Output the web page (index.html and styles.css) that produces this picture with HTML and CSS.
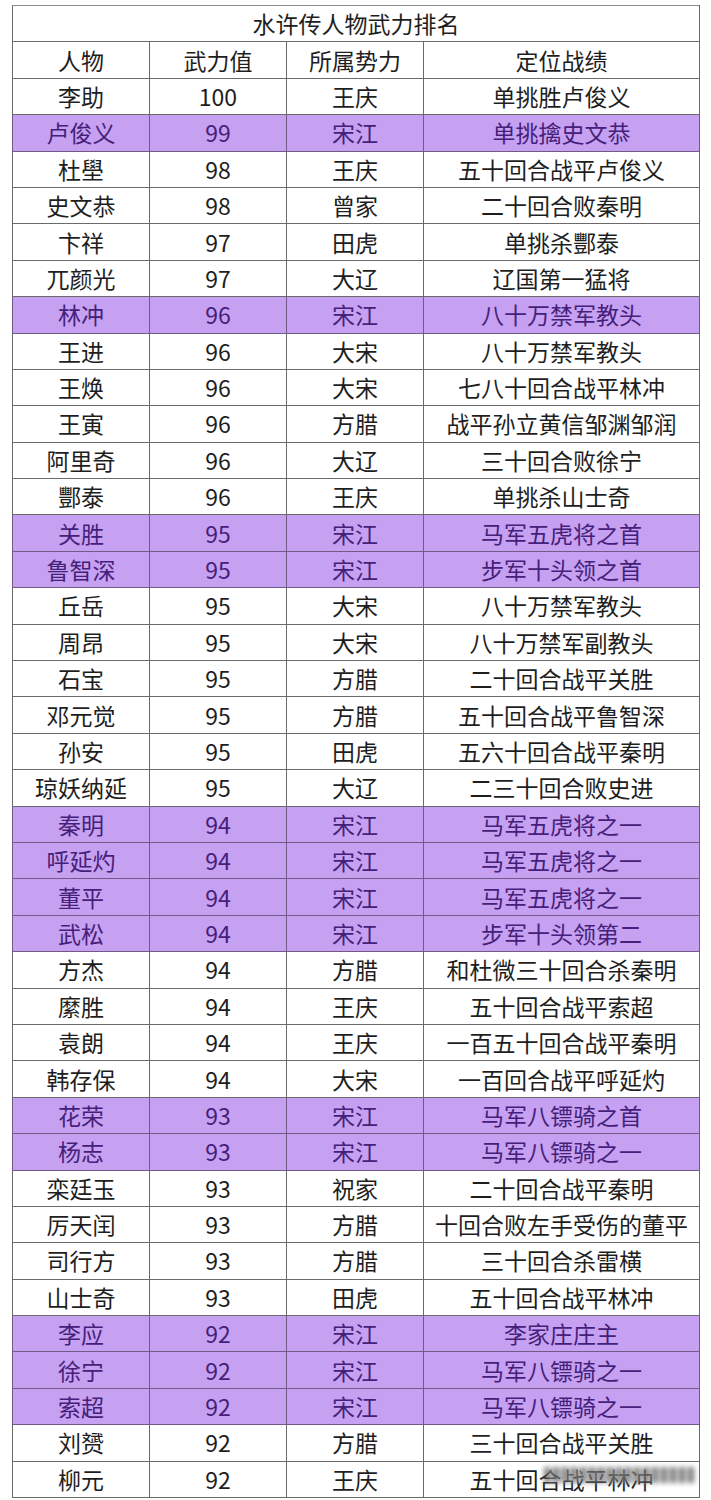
FILE: index.html
```html
<!DOCTYPE html>
<html lang="zh">
<head>
<meta charset="utf-8">
<link rel="stylesheet" href="styles.css">
</head>
<body>
<table class="rank">
<colgroup><col class="c1"><col class="c2"><col class="c3"><col class="c4"></colgroup>
<tr><td class="title" colspan="4">水许传人物武力排名</td></tr>
<tr><td>人物</td><td>武力值</td><td>所属势力</td><td>定位战绩</td></tr>
<tr><td>李助</td><td>100</td><td>王庆</td><td>单挑胜卢俊义</td></tr>
<tr class="p"><td>卢俊义</td><td>99</td><td>宋江</td><td>单挑擒史文恭</td></tr>
<tr><td>杜壆</td><td>98</td><td>王庆</td><td>五十回合战平卢俊义</td></tr>
<tr><td>史文恭</td><td>98</td><td>曾家</td><td>二十回合败秦明</td></tr>
<tr><td>卞祥</td><td>97</td><td>田虎</td><td>单挑杀酆泰</td></tr>
<tr><td>兀颜光</td><td>97</td><td>大辽</td><td>辽国第一猛将</td></tr>
<tr class="p"><td>林冲</td><td>96</td><td>宋江</td><td>八十万禁军教头</td></tr>
<tr><td>王进</td><td>96</td><td>大宋</td><td>八十万禁军教头</td></tr>
<tr><td>王焕</td><td>96</td><td>大宋</td><td>七八十回合战平林冲</td></tr>
<tr><td>王寅</td><td>96</td><td>方腊</td><td>战平孙立黄信邹渊邹润</td></tr>
<tr><td>阿里奇</td><td>96</td><td>大辽</td><td>三十回合败徐宁</td></tr>
<tr><td>酆泰</td><td>96</td><td>王庆</td><td>单挑杀山士奇</td></tr>
<tr class="p"><td>关胜</td><td>95</td><td>宋江</td><td>马军五虎将之首</td></tr>
<tr class="p"><td>鲁智深</td><td>95</td><td>宋江</td><td>步军十头领之首</td></tr>
<tr><td>丘岳</td><td>95</td><td>大宋</td><td>八十万禁军教头</td></tr>
<tr><td>周昂</td><td>95</td><td>大宋</td><td>八十万禁军副教头</td></tr>
<tr><td>石宝</td><td>95</td><td>方腊</td><td>二十回合战平关胜</td></tr>
<tr><td>邓元觉</td><td>95</td><td>方腊</td><td>五十回合战平鲁智深</td></tr>
<tr><td>孙安</td><td>95</td><td>田虎</td><td>五六十回合战平秦明</td></tr>
<tr><td>琼妖纳延</td><td>95</td><td>大辽</td><td>二三十回合败史进</td></tr>
<tr class="p"><td>秦明</td><td>94</td><td>宋江</td><td>马军五虎将之一</td></tr>
<tr class="p"><td>呼延灼</td><td>94</td><td>宋江</td><td>马军五虎将之一</td></tr>
<tr class="p"><td>董平</td><td>94</td><td>宋江</td><td>马军五虎将之一</td></tr>
<tr class="p"><td>武松</td><td>94</td><td>宋江</td><td>步军十头领第二</td></tr>
<tr><td>方杰</td><td>94</td><td>方腊</td><td>和杜微三十回合杀秦明</td></tr>
<tr><td>縻胜</td><td>94</td><td>王庆</td><td>五十回合战平索超</td></tr>
<tr><td>袁朗</td><td>94</td><td>王庆</td><td>一百五十回合战平秦明</td></tr>
<tr><td>韩存保</td><td>94</td><td>大宋</td><td>一百回合战平呼延灼</td></tr>
<tr class="p"><td>花荣</td><td>93</td><td>宋江</td><td>马军八镖骑之首</td></tr>
<tr class="p"><td>杨志</td><td>93</td><td>宋江</td><td>马军八镖骑之一</td></tr>
<tr><td>栾廷玉</td><td>93</td><td>祝家</td><td>二十回合战平秦明</td></tr>
<tr><td>厉天闰</td><td>93</td><td>方腊</td><td>十回合败左手受伤的董平</td></tr>
<tr><td>司行方</td><td>93</td><td>方腊</td><td>三十回合杀雷横</td></tr>
<tr><td>山士奇</td><td>93</td><td>田虎</td><td>五十回合战平林冲</td></tr>
<tr class="p"><td>李应</td><td>92</td><td>宋江</td><td>李家庄庄主</td></tr>
<tr class="p"><td>徐宁</td><td>92</td><td>宋江</td><td>马军八镖骑之一</td></tr>
<tr class="p"><td>索超</td><td>92</td><td>宋江</td><td>马军八镖骑之一</td></tr>
<tr><td>刘赟</td><td>92</td><td>方腊</td><td>三十回合战平关胜</td></tr>
<tr><td>柳元</td><td>92</td><td>王庆</td><td class="wm">五十回合战平林冲<span class="blur"></span></td></tr>
</table>
</body>
</html>
```

FILE: styles.css
```css
html, body {
  margin: 0;
  padding: 0;
  background: #ffffff;
}
body {
  padding: 5px 0 0 12px;
  font-family: "Noto Sans CJK SC", "Noto Sans", sans-serif;
  color: #1e1e1e;
}
.rank {
  border-collapse: collapse;
  table-layout: fixed;
  width: 687px;
  font-size: 23px;
}
.c1 { width: 137px; }
.c2 { width: 137px; }
.c3 { width: 137px; }
.c4 { width: 276px; }
.rank tr {
  height: 36.4px;
}
.rank td {
  border: 1.5px solid #6a6a6a;
  height: 33px;
  padding: 0;
  text-align: center;
  vertical-align: middle;
  line-height: 1;
  white-space: nowrap;
  overflow: hidden;
}
.rank .title {
  border-top-color: #8a8a8a;
}
.rank tr.p td {
  background: #c6a0f1;
  color: #45207a;
  border-color: #6f5a88;
}
.wm {
  position: relative;
}
.blur {
  position: absolute;
  left: 120px;
  right: 4px;
  top: 5px;
  height: 16px;
  background: repeating-linear-gradient(90deg, rgba(90,90,90,0.75) 0 6px, rgba(200,200,200,0.6) 6px 9px);
  filter: blur(2.5px);
}
```
